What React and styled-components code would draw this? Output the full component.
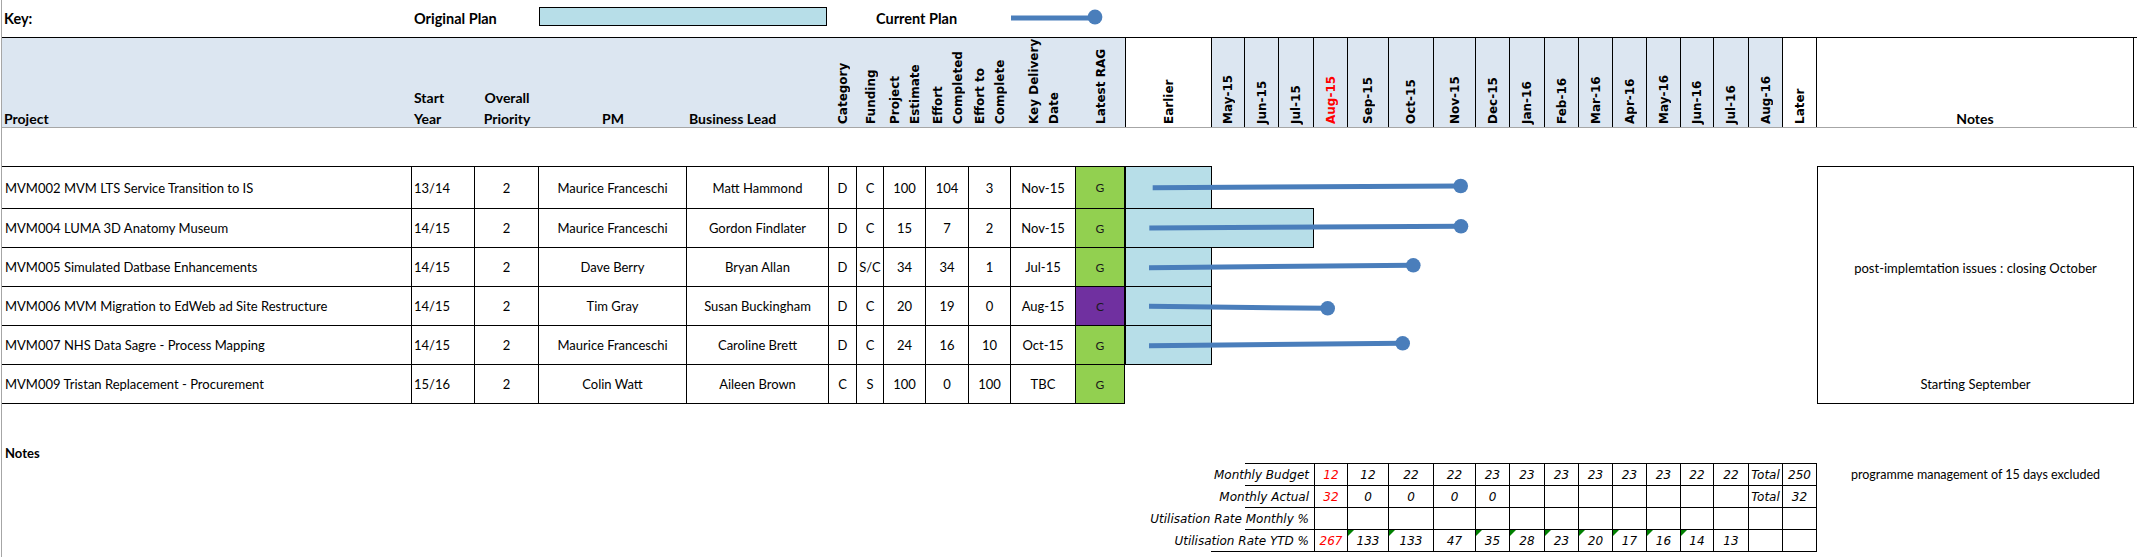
import React from "react";
import styled, { createGlobalStyle, css } from "styled-components";

// column widths, Project .. Notes
const COLS = [
  410, 63, 64, 148, 142, 28, 27, 42, 43, 42, 65, 49, 87, 33, 34, 35, 34, 41,
  45, 42, 34, 35, 34, 34, 34, 34, 33, 35, 34, 34, 317,
];
const TEMPLATE = COLS.map((w) => `${w}px`).join(" ");
const TIMELINE = COLS.slice(12, 30);
const TIMELINE_W = TIMELINE.reduce((a, b) => a + b, 0);
const ROW_TEMPLATE = [...COLS.slice(0, 12), TIMELINE_W]
  .map((w) => `${w}px`)
  .join(" ");

const BLUE = "#dce6f1";
const PLAN = "#b7dee8";
const LINE = "#4a7ebb";
const SHEET_FONT = `Lato, "Open Sans", sans-serif`;
const WIDE_FONT = `"DejaVu Sans", Verdana, sans-serif`;

const MONTHS = [
  "May-15", "Jun-15", "Jul-15", "Aug-15", "Sep-15", "Oct-15", "Nov-15",
  "Dec-15", "Jan-16", "Feb-16", "Mar-16", "Apr-16", "May-16", "Jun-16",
  "Jul-16", "Aug-16",
];

const TURNED_HEADS = [
  "Category",
  "Funding",
  "Project\nEstimate",
  "Effort\nCompleted",
  "Effort to\nComplete",
  "Key Delivery\nDate",
  "Latest RAG",
];

const ROWS = [
  {
    project: "MVM002 MVM LTS Service Transition to IS",
    year: "13/14", priority: 2, pm: "Maurice Franceschi", lead: "Matt Hammond",
    category: "D", funding: "C", estimate: 100, completed: 104, remaining: 3,
    delivery: "Nov-15", rag: "G", plan: 1, line: [27.7, 21.7, 335.7, 20],
  },
  {
    project: "MVM004 LUMA 3D Anatomy Museum",
    year: "14/15", priority: 2, pm: "Maurice Franceschi", lead: "Gordon Findlater",
    category: "D", funding: "C", estimate: 15, completed: 7, remaining: 2,
    delivery: "Nov-15", rag: "G", plan: 4, line: [24.3, 19, 336, 17.3],
  },
  {
    project: "MVM005 Simulated Datbase Enhancements",
    year: "14/15", priority: 2, pm: "Dave Berry", lead: "Bryan Allan",
    category: "D", funding: "S/C", estimate: 34, completed: 34, remaining: 1,
    delivery: "Jul-15", rag: "G", plan: 1, line: [24, 19.7, 288.3, 17.3],
  },
  {
    project: "MVM006 MVM Migration to EdWeb ad Site Restructure",
    year: "14/15", priority: 2, pm: "Tim Gray", lead: "Susan Buckingham",
    category: "D", funding: "C", estimate: 20, completed: 19, remaining: 0,
    delivery: "Aug-15", rag: "C", plan: 1, line: [24, 19.3, 202.7, 21.3],
  },
  {
    project: "MVM007 NHS Data Sagre - Process Mapping",
    year: "14/15", priority: 2, pm: "Maurice Franceschi", lead: "Caroline Brett",
    category: "D", funding: "C", estimate: 24, completed: 16, remaining: 10,
    delivery: "Oct-15", rag: "G", plan: 1, line: [24, 19.7, 277.7, 17.3],
  },
  {
    project: "MVM009 Tristan Replacement - Procurement",
    year: "15/16", priority: 2, pm: "Colin Watt", lead: "Aileen Brown",
    category: "C", funding: "S", estimate: 100, completed: 0, remaining: 100,
    delivery: "TBC", rag: "G", plan: 0, line: null,
  },
];

const RAG_COLOURS = { G: "#92d050", C: "#7030a0" };

const BUDGET = [
  {
    label: "Monthly Budget",
    values: ["12", "12", "22", "22", "23", "23", "23", "23", "23", "23", "22", "22", "Total", "250"],
    rule: 69,
    aside: "programme management of 15 days excluded",
  },
  {
    label: "Monthly Actual",
    values: ["32", "0", "0", "0", "0", "", "", "", "", "", "", "", "Total", "32"],
    rule: 69,
  },
  {
    label: "Utilisation Rate Monthly %",
    values: Array(14).fill(""),
    rule: 69,
  },
  {
    label: "Utilisation Rate YTD %",
    values: ["267", "133", "133", "47", "35", "28", "23", "20", "17", "16", "14", "13", "", ""],
    rule: 103,
    flags: [1, 2, 4, 5, 6, 7, 8, 9, 10],
  },
];

const GlobalStyle = createGlobalStyle`
  html, body {
    margin: 0;
    padding: 0;
    background: #fff;
  }
  body {
    font-family: ${SHEET_FONT};
    color: #000;
  }
`;

const Page = styled.div`
  width: 2135px;
  height: 557px;
  margin-left: 1px;
  border-left: 1px solid #a6a6a6;
  overflow: hidden;
`;

/* ---------- key ---------- */

const KeyBar = styled.div`
  height: 37px;
  display: flex;
  align-items: center;
  padding-left: 2px;
`;

const KeyText = styled.div`
  width: ${(p) => p.$w}px;
  margin-left: ${(p) => p.$gap || 0}px;
  font-weight: 700;
  font-size: 14.5px;
  white-space: nowrap;
`;

const LegendBox = styled.div`
  width: 288px;
  height: 19px;
  margin-bottom: 4px;
  box-sizing: border-box;
  background: ${PLAN};
  border: 1px solid #000;
`;

const LegendLine = styled.svg`
  display: block;
  margin-bottom: 2px;
`;

/* ---------- header ---------- */

const Header = styled.div`
  display: grid;
  grid-template-columns: ${TEMPLATE};
  grid-template-rows: 89px;
  height: 91px;
  box-sizing: border-box;
  border-top: 1px solid #000;
  border-bottom: 1px solid #a6a6a6;
`;

const edges = css`
  box-sizing: border-box;
  background: ${(p) => p.$bg || "#fff"};
  color: ${(p) => p.$colour || "#000"};
  ${(p) =>
    p.$ruled &&
    css`
      border-right: 1px solid #000;
    `}
  ${(p) =>
    p.$lead &&
    css`
      border-left: 1px solid #000;
    `}
`;

const HeadCell = styled.div`
  ${edges}
  display: flex;
  align-items: flex-end;
  justify-content: ${(p) => (p.$align === "center" ? "center" : "flex-start")};
  padding: 0 ${(p) => (p.$align === "center" ? 0 : 2)}px 3px;
  font-weight: 700;
  font-size: 14px;
  text-align: ${(p) => p.$align || "left"};
`;

const HeadText = styled.div`
  line-height: 21px;
  margin-bottom: -5px;
  white-space: nowrap;
`;

const TurnedCell = styled.div`
  ${edges}
  display: grid;
  padding-bottom: 3px;
`;

// rotated header label, reads bottom-to-top
const Turned = styled.div`
  writing-mode: vertical-rl;
  transform: rotate(180deg);
  display: flex;
  align-items: center;
  justify-content: flex-start;
  font-family: ${WIDE_FONT};
  font-weight: 700;
  font-size: 12px;
  line-height: 20px;
  white-space: pre;
  text-align: start;
`;

const HeadGap = styled.div`
  height: 38px;
`;

/* ---------- project rows ---------- */

const Body = styled.div`
  display: flex;
  align-items: flex-start;
`;

const Rows = styled.div`
  display: flex;
  flex-direction: column;
`;

const Cell = styled.div`
  display: flex;
  align-items: center;
  justify-content: ${(p) => (p.$align === "left" ? "flex-start" : "center")};
  padding: 0 ${(p) => (p.$align === "left" ? p.$pad ?? 3 : 0)}px;
  box-sizing: border-box;
  border-right: 1px solid #000;
  border-bottom: 1px solid #000;
  background: ${(p) => p.$bg || "transparent"};
  font-size: ${(p) => p.$size || 13}px;
  color: ${(p) => p.$colour || "#000"};
  white-space: nowrap;
  overflow: hidden;
`;

const Row = styled.div`
  display: grid;
  grid-template-columns: ${ROW_TEMPLATE};
  height: ${(p) => p.$h}px;
  ${(p) =>
    p.$first &&
    css`
      & > ${Cell} {
        border-top: 1px solid #000;
      }
    `}
`;

const Timeline = styled.div`
  position: relative;
  display: grid;
  grid-template-columns: ${TIMELINE.map((w) => `${w}px`).join(" ")};
`;

const PlanBar = styled.div`
  grid-column: 1 / span ${(p) => p.$span};
  box-sizing: border-box;
  background: ${PLAN};
  border: 1px solid #000;
  margin-top: ${(p) => (p.$first ? 0 : -1)}px;
  height: ${(p) => (p.$first ? "100%" : "calc(100% + 1px)")};
`;

const Trail = styled.svg`
  position: absolute;
  left: 0;
  top: 0;
  overflow: visible;
`;

const NotesBox = styled.div`
  width: 317px;
  height: 238px;
  box-sizing: border-box;
  border: 1px solid #000;
  display: grid;
  grid-template-rows: 42px 39px 39px 39px 39px 38px;
`;

const NoteLine = styled.div`
  display: flex;
  align-items: center;
  justify-content: center;
  font-size: 13px;
`;

/* ---------- budget ---------- */

const NotesLabel = styled.div`
  margin-top: 41px;
  height: 16px;
  line-height: 16px;
  padding-left: 3px;
  font-weight: 700;
  font-size: 13px;
`;

const Budget = styled.div`
  margin-top: 2px;
`;

const BudgetCell = styled.div`
  position: relative;
  display: flex;
  align-items: center;
  justify-content: center;
  box-sizing: border-box;
  border-right: 1px solid #000;
  border-bottom: 1px solid #000;
  font-family: ${WIDE_FONT};
  font-style: italic;
  font-size: 12px;
  color: ${(p) => (p.$red ? "#ff0000" : "#000")};
  ${(p) =>
    p.$lead &&
    css`
      border-left: 1px solid #000;
    `}
  ${(p) =>
    p.$flag &&
    css`
      &::before {
        content: "";
        position: absolute;
        left: 0;
        top: 0;
        border-top: 6px solid #008000;
        border-right: 6px solid transparent;
      }
    `}
`;

const BudgetLabel = styled.div`
  grid-column: 1 / span 16;
  position: relative;
  display: flex;
  align-items: center;
  justify-content: flex-end;
  padding-right: 5px;
  font-family: ${WIDE_FONT};
  font-style: italic;
  font-size: 12px;
  white-space: nowrap;

  &::after {
    content: "";
    position: absolute;
    right: 0;
    bottom: 0;
    width: ${(p) => p.$rule}px;
    border-bottom: 1px solid #000;
  }

  ${(p) =>
    p.$top &&
    css`
      &::before {
        content: "";
        position: absolute;
        right: 0;
        top: 0;
        width: ${p.$rule}px;
        border-top: 1px solid #000;
      }
    `}
`;

const BudgetRow = styled.div`
  display: grid;
  grid-template-columns: ${TEMPLATE};
  height: ${(p) => (p.$first ? 23 : 22)}px;
  ${(p) =>
    p.$first &&
    css`
      & > ${BudgetCell} {
        border-top: 1px solid #000;
      }
    `}
`;

const Aside = styled.div`
  display: flex;
  align-items: center;
  justify-content: center;
  font-size: 12.5px;
  white-space: nowrap;
`;

const ProjectRow = ({ row, first }) => {
  const h = first ? 43 : 39;
  return (
    <Row $h={h} $first={first}>
      <Cell $align="left">{row.project}</Cell>
      <Cell $align="left" $pad={2}>{row.year}</Cell>
      <Cell>{row.priority}</Cell>
      <Cell>{row.pm}</Cell>
      <Cell>{row.lead}</Cell>
      <Cell>{row.category}</Cell>
      <Cell>{row.funding}</Cell>
      <Cell>{row.estimate}</Cell>
      <Cell>{row.completed}</Cell>
      <Cell>{row.remaining}</Cell>
      <Cell>{row.delivery}</Cell>
      <Cell $bg={RAG_COLOURS[row.rag]} $size={12} $colour="#1a1a1a">
        {row.rag}
      </Cell>
      <Timeline>
        {row.plan > 0 && <PlanBar $span={row.plan} $first={first} />}
        {row.line && (
          <Trail width={TIMELINE_W} height={h}>
            <line
              x1={row.line[0]}
              y1={row.line[1]}
              x2={row.line[2]}
              y2={row.line[3]}
              stroke={LINE}
              strokeWidth="5"
            />
            <circle cx={row.line[2]} cy={row.line[3]} r="7.3" fill={LINE} />
          </Trail>
        )}
      </Timeline>
    </Row>
  );
};

const App = () => {
  return (
    <Page>
      <GlobalStyle />
      <KeyBar>
        <KeyText $w={410}>Key:</KeyText>
        <KeyText $w={125}>Original Plan</KeyText>
        <LegendBox />
        <KeyText $w={135} $gap={49}>
          Current Plan
        </KeyText>
        <LegendLine width="110" height="18">
          <line x1="0" y1="9" x2="84" y2="9" stroke={LINE} strokeWidth="5" />
          <circle cx="84" cy="8" r="7.4" fill={LINE} />
        </LegendLine>
      </KeyBar>

      <Header>
        <HeadCell $bg={BLUE}>
          <HeadText>Project</HeadText>
        </HeadCell>
        <HeadCell $bg={BLUE}>
          <HeadText>
            Start
            <br />
            Year
          </HeadText>
        </HeadCell>
        <HeadCell $bg={BLUE} $align="center">
          <HeadText>
            Overall
            <br />
            Priority
          </HeadText>
        </HeadCell>
        <HeadCell $bg={BLUE} $align="center">
          <HeadText>PM</HeadText>
        </HeadCell>
        <HeadCell $bg={BLUE}>
          <HeadText>Business Lead</HeadText>
        </HeadCell>
        {TURNED_HEADS.map((t) => (
          <TurnedCell key={t} $bg={BLUE}>
            <Turned>{t}</Turned>
          </TurnedCell>
        ))}
        <TurnedCell $ruled $lead>
          <Turned>Earlier</Turned>
        </TurnedCell>
        {MONTHS.map((m) => (
          <TurnedCell
            key={m}
            $bg={BLUE}
            $ruled
            $colour={m === "Aug-15" ? "#ff0000" : "#000"}
          >
            <Turned>{m}</Turned>
          </TurnedCell>
        ))}
        <TurnedCell $ruled>
          <Turned>Later</Turned>
        </TurnedCell>
        <HeadCell $align="center" $ruled>
          <HeadText>Notes</HeadText>
        </HeadCell>
      </Header>

      <HeadGap />

      <Body>
        <Rows>
          {ROWS.map((row, i) => (
            <ProjectRow key={row.project} row={row} first={i === 0} />
          ))}
        </Rows>
        <NotesBox>
          <NoteLine />
          <NoteLine />
          <NoteLine>post-implemtation issues : closing October</NoteLine>
          <NoteLine />
          <NoteLine />
          <NoteLine>Starting September</NoteLine>
        </NotesBox>
      </Body>

      <NotesLabel>Notes</NotesLabel>

      <Budget>
        {BUDGET.map((b, i) => (
          <BudgetRow key={b.label} $first={i === 0}>
            <BudgetLabel $rule={b.rule} $top={i === 0}>
              {b.label}
            </BudgetLabel>
            {b.values.map((v, j) => (
              <BudgetCell
                key={j}
                $lead={j === 0}
                $red={j === 0}
                $flag={b.flags && b.flags.includes(j)}
              >
                {v}
              </BudgetCell>
            ))}
            <Aside>{b.aside}</Aside>
          </BudgetRow>
        ))}
      </Budget>
    </Page>
  );
};

export default App;
